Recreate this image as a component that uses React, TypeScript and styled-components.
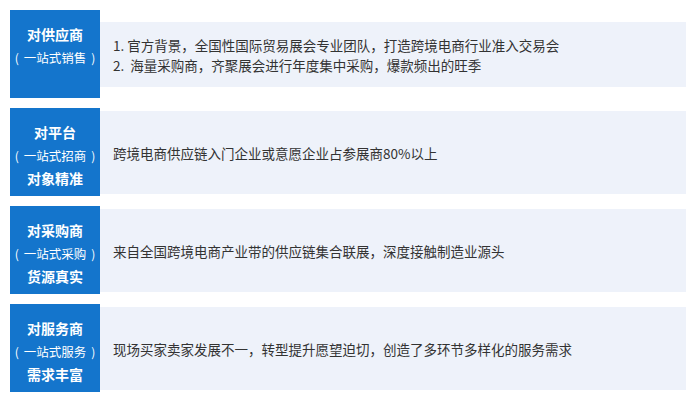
import React from "react";
import styled, { createGlobalStyle } from "styled-components";

const Global = createGlobalStyle`
  html, body { margin: 0; padding: 0; background: #ffffff; }
  body { font-family: "Microsoft YaHei", "Noto Sans CJK SC", "Noto Sans", sans-serif; }
`;

const Page = styled.div`
  width: 697px;
  height: 400px;
  box-sizing: border-box;
  padding: 10px 11px 0 10px;
  display: flex;
  flex-direction: column;
  gap: 10px;
`;

const Row = styled.div`
  display: flex;
  align-items: center;
  height: 88px;
`;

const Label = styled.div`
  width: 90px;
  height: 88px;
  flex: none;
  box-sizing: border-box;
  padding-top: 13px;
  background: #1475cc;
  color: #ffffff;
  display: flex;
  flex-direction: column;
  align-items: center;
`;

const Title = styled.div`
  font-size: 14px;
  font-weight: bold;
  line-height: 23px;
`;

const Sub = styled.div`
  font-size: 12.5px;
  line-height: 23px;
  white-space: nowrap;
  display: flex;
  align-items: center;
  gap: 5px;
`;

const Paren = styled.span`
  font-size: 12px;
`;

const Content = styled.div<{ $h: number }>`
  flex: 1;
  height: ${(p) => p.$h}px;
  margin-top: 1px;
  box-sizing: border-box;
  padding-left: 13px;
  background: #eef2fa;
  color: #333333;
  font-size: 13.5px;
  line-height: 20px;
  display: flex;
  flex-direction: column;
  justify-content: center;
`;

const Line = styled.div`
  white-space: pre;
`;

type Item = { title: string; sub: string; extra?: string; lines: string[]; h: number };

const items: Item[] = [
  {
    title: "对供应商",
    sub: "一站式销售",
    lines: [
      "1. 官方背景，全国性国际贸易展会专业团队，打造跨境电商行业准入交易会",
      "2.  海量采购商，齐聚展会进行年度集中采购，爆款频出的旺季",
    ],
    h: 65,
  },
  {
    title: "对平台",
    sub: "一站式招商",
    extra: "对象精准",
    lines: ["跨境电商供应链入门企业或意愿企业占参展商80%以上"],
    h: 83,
  },
  {
    title: "对采购商",
    sub: "一站式采购",
    extra: "货源真实",
    lines: ["来自全国跨境电商产业带的供应链集合联展，深度接触制造业源头"],
    h: 83,
  },
  {
    title: "对服务商",
    sub: "一站式服务",
    extra: "需求丰富",
    lines: ["现场买家卖家发展不一，转型提升愿望迫切，创造了多环节多样化的服务需求"],
    h: 83,
  },
];

export default function App() {
  return (
    <>
      <Global />
      <Page>
        {items.map((it) => (
          <Row key={it.title}>
            <Label>
              <Title>{it.title}</Title>
              <Sub>
                <Paren>(</Paren>
                <span>{it.sub}</span>
                <Paren>)</Paren>
              </Sub>
              {it.extra && <Title>{it.extra}</Title>}
            </Label>
            <Content $h={it.h}>
              {it.lines.map((l) => (
                <Line key={l}>{l}</Line>
              ))}
            </Content>
          </Row>
        ))}
      </Page>
    </>
  );
}
